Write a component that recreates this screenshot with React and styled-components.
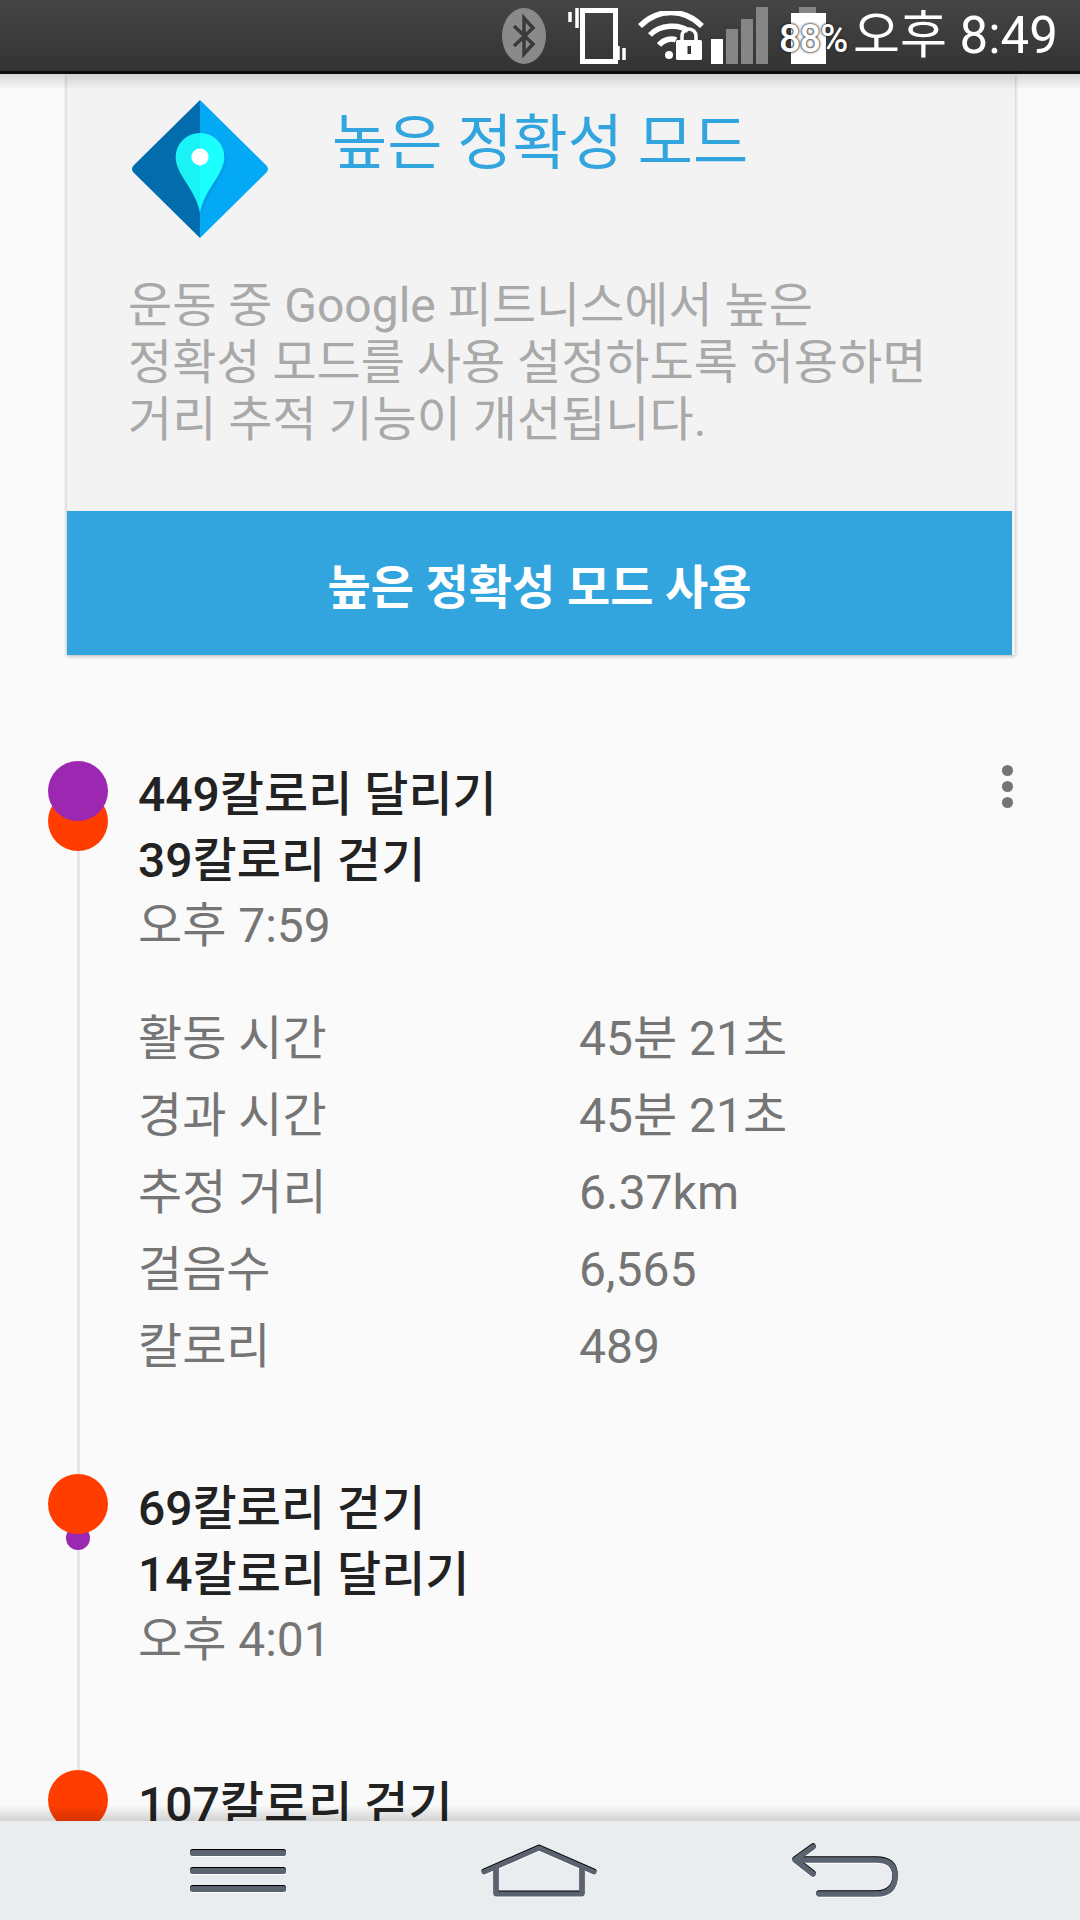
import React from 'react';
import styled, { createGlobalStyle } from 'styled-components';

const Global = createGlobalStyle`
  html, body { margin: 0; padding: 0; background: #fafafa; }
  body { font-family: Roboto, "Noto Sans CJK KR", sans-serif; }
`;
const Screen = styled.div`
  width: 1080px; height: 1920px; overflow: hidden; position: relative;
  display: flex; flex-direction: column; background: #fafafa;
`;
const StatusBar = styled.div`
  height: 74px; flex: none; background: linear-gradient(#454545, #333); position: relative; z-index: 2;
  display: flex; align-items: center; padding-left: 502px; color: #fff;
  border-bottom: 3px solid #0c0c0c; box-sizing: border-box;
  &::after { content: ""; position: absolute; left: 0; right: 0; top: 74px; height: 16px;
    background: linear-gradient(rgba(0,0,0,.14), rgba(0,0,0,0)); }
`;
const Slot = styled.span`
  display: inline-flex; flex: none; margin-left: ${p => p.$ml || 0}px; position: relative;
`;
const Clock = styled.span`
  font-size: 51px; line-height: 72px; white-space: nowrap; margin-left: 27px;
`;
const Content = styled.div`flex: 1; min-height: 0; overflow: hidden; display: flex; flex-direction: column;`;
const Card = styled.section`
  margin: 0 65px 0 67px; background: #f3f3f3; box-shadow: 0 1px 4px rgba(0,0,0,.3); flex: none;
`;
const CardHead = styled.div`
  display: flex; height: 203px; padding: 26px 0 0 64px; gap: 63px; box-sizing: border-box;
`;
const CardTitle = styled.h2`
  margin: 7px 0 0; font-size: 60px; font-weight: 400; color: #33a5de; line-height: 74px;
`;
const CardBody = styled.p`
  margin: 0; padding: 0 0 0 61px; font-size: 48px; line-height: 57px; height: 234px; color: #a9a9a9; white-space: pre-line;
`;
const CardButton = styled.div`
  height: 144px; background: #33a5de; color: #fff; font-size: 47px; font-weight: 700;
  display: flex; align-items: center; justify-content: center; margin-right: 3px;
`;
const Timeline = styled.div`
  padding-top: 104px; display: flex; flex-direction: column;
`;
const Entry = styled.article`
  position: relative; padding: ${p => p.$pt}px 0 ${p => p.$pb}px 138px;
  &::before { content: ""; position: absolute; left: 77px; top: 20px; bottom: -20px; width: 3px; background: #e6e6e6; }
`;
const Dot = styled.span`
  position: absolute; border-radius: 50%; background: ${p => p.$c}; z-index: 1;
  left: ${p => p.$x}px; top: ${p => p.$y}px; width: ${p => p.$s}px; height: ${p => p.$s}px;
`;
const Strong = styled.div`
  font-size: 48px; font-weight: 500; color: #222; line-height: 66px;
`;
const Time = styled.div`
  font-size: 48px; color: #757575; line-height: 64px;
`;
const Stats = styled.div`
  display: grid; grid-template-columns: 441px 1fr; margin-top: 42px;
  font-size: 48px; color: #757575; line-height: 77px;
`;
const Menu = styled.div`
  position: absolute; top: 6px; right: 67px; display: flex; flex-direction: column; gap: 5px;
  & > i { display: block; width: 11px; height: 11px; border-radius: 50%; background: #757575; }
`;
const NavBar = styled.nav`
  position: absolute; left: 0; right: 0; bottom: 0; height: 99px; background: #e9edf0; box-sizing: border-box; z-index: 3;
  display: flex; align-items: center; justify-content: space-between; padding: 0 182px 0 190px;
  &::before { content: ""; position: absolute; left: 0; right: 0; top: -16px; height: 16px;
    background: linear-gradient(rgba(0,0,0,0), rgba(0,0,0,.16)); }
  & > svg { filter: drop-shadow(0 -1px 0 #000) drop-shadow(0 1px 0 #fff); }
`;

const Bt = () => (
  <svg width="44" height="56" viewBox="0 0 44 56">
    <ellipse cx="22" cy="28" rx="22" ry="28" fill="#8a8a8a"/>
    <path d="M12 18 L31 36 L22 46 V10 L31 20 L12 38" fill="none" stroke="#3a3a3a" strokeWidth="3.5"/>
  </svg>
);
const Vibe = () => (
  <svg width="59" height="56" viewBox="0 0 59 56" fill="none" stroke="#fff">
    <rect x="14.5" y="2.5" width="33" height="51" strokeWidth="5"/>
    <path d="M2 4v10M9 0v20" strokeWidth="3.5"/>
    <path d="M50 38v14M56 40v12" strokeWidth="3.5"/>
  </svg>
);
const Wifi = () => (
  <svg width="66" height="50" viewBox="0 0 66 50" fill="none" stroke="#fff" strokeWidth="5.5">
    <path d="M2 15 C20 -3 46 -3 64 15"/>
    <path d="M12 24 C22 13 42 13 50 20"/>
    <path d="M21 34 C26 28 34 27 38 29"/>
    <circle cx="31" cy="44" r="4" fill="#fff" stroke="none"/>
    <rect x="38" y="29" width="26" height="20" rx="1.5" fill="#fff" stroke="none"/>
    <path d="M44 29v-4a7 7 0 0 1 14 0v4" strokeWidth="3.5"/>
    <rect x="49.5" y="35" width="3.5" height="8" fill="#333" stroke="none"/>
  </svg>
);
const Signal = () => (
  <svg width="58" height="57" viewBox="0 0 58 57" fill="#868686">
    <rect x="0" y="32" width="12" height="25" fill="#fff"/>
    <rect x="15" y="22" width="12" height="35"/>
    <rect x="30" y="12" width="12" height="45"/>
    <rect x="45" y="0" width="12" height="57"/>
  </svg>
);
const Battery = () => (
  <>
    <svg width="35" height="57" viewBox="0 0 35 57">
      <rect x="8" y="0" width="17" height="6" fill="#868686"/>
      <rect x="0" y="6" width="35" height="51" fill="#fff"/>
    </svg>
    <BatteryText>88%</BatteryText>
  </>
);
const BatteryText = styled.span`
  position: absolute; top: 12px; left: -12px; font-size: 38px; font-weight: 500; line-height: 40px; letter-spacing: -1px; color: #fff;
  text-shadow: 0 0 3px #222, 0 0 2px #222; white-space: nowrap;
`;
const Pin = () => (
  <PinSvg width="138" height="138" viewBox="2 1 136 138" preserveAspectRatio="none">
    <path d="M70 1 L5 66 Q1 70 5 74 L70 139 Z" fill="#026cad"/>
    <path d="M70 1 L135 66 Q139 70 135 74 L70 139 Z" fill="#03a9f4"/>
    <path d="M70 114 C66 90 46 76 46 58 a24 24 0 0 1 48 0 C94 76 74 90 70 114Z" fill="#0288d1" opacity=".35" transform="translate(2 2)"/>
    <path d="M70 114 C66 90 46 76 46 58 a24 24 0 0 1 24 -24 Z" fill="#1af3f5"/>
    <path d="M70 114 C74 90 94 76 94 58 a24 24 0 0 0 -24 -24 Z" fill="#1cffff"/>
    <circle cx="70" cy="58" r="8.5" fill="#fff"/>
  </PinSvg>
);
const PinSvg = styled.svg`flex: none;`;
const Menu3 = () => (
  <svg width="96" height="43" viewBox="0 0 96 43" fill="#5c6370">
    <rect x="0" y="1" width="96" height="6" rx="2.5"/>
    <rect x="0" y="19" width="96" height="6" rx="2.5"/>
    <rect x="0" y="37" width="96" height="6" rx="2.5"/>
  </svg>
);
const Home = () => (
  <svg width="116" height="52" viewBox="0 0 116 52" fill="none" stroke="#5c6370" strokeWidth="5" strokeLinecap="round" strokeLinejoin="round">
    <path d="M3 27 L58 3 L113 27"/>
    <path d="M15 23 V49 H101 V23"/>
  </svg>
);
const Back = () => (
  <svg width="106" height="53" viewBox="0 0 106 53" fill="none" stroke="#5c6370" strokeWidth="5.5" strokeLinecap="round" strokeLinejoin="round">
    <path d="M21 3 L3 16 L21 30"/>
    <path d="M5 16 H84 Q103 16 103 32 Q103 50 84 50 H27"/>
  </svg>
);

const stats = [
  ['활동 시간', '45분 21초'],
  ['경과 시간', '45분 21초'],
  ['추정 거리', '6.37km'],
  ['걸음수', '6,565'],
  ['칼로리', '489'],
];

export default function App() {
  return (
    <Screen>
      <Global />
      <StatusBar>
        <Slot><Bt /></Slot>
        <Slot $ml={22}><Vibe /></Slot>
        <Slot $ml={11}><Wifi /></Slot>
        <Slot $ml={7}><Signal /></Slot>
        <Slot $ml={22}><Battery /></Slot>
        <Clock>오후 8:49</Clock>
      </StatusBar>
      <Content>
        <Card>
          <CardHead>
            <Pin />
            <CardTitle>높은 정확성 모드</CardTitle>
          </CardHead>
          <CardBody>{'운동 중 Google 피트니스에서 높은\n정확성 모드를 사용 설정하도록 허용하면\n거리 추적 기능이 개선됩니다.'}</CardBody>
          <CardButton>높은 정확성 모드 사용</CardButton>
        </Card>
        <Timeline>
          <Entry $pt={3} $pb={89}>
            <Dot $c="#ff3d00" $x={48} $y={32} $s={60} />
            <Dot $c="#9c27b0" $x={48} $y={2} $s={60} />
            <Strong>449칼로리 달리기</Strong>
            <Strong>39칼로리 걷기</Strong>
            <Time>오후 7:59</Time>
            <Stats>
              {stats.map(([k, v]) => (
                <React.Fragment key={k}><span>{k}</span><span>{v}</span></React.Fragment>
              ))}
            </Stats>
            <Menu><i /><i /><i /></Menu>
          </Entry>
          <Entry $pt={2} $pb={98}>
            <Dot $c="#9c27b0" $x={66} $y={52} $s={24} />
            <Dot $c="#ff3d00" $x={48} $y={0} $s={60} />
            <Strong>69칼로리 걷기</Strong>
            <Strong>14칼로리 달리기</Strong>
            <Time>오후 4:01</Time>
          </Entry>
          <Entry $pt={2} $pb={100}>
            <Dot $c="#ff3d00" $x={48} $y={0} $s={60} />
            <Strong>107칼로리 걷기</Strong>
          </Entry>
        </Timeline>
      </Content>
      <NavBar><Menu3 /><Home /><Back /></NavBar>
    </Screen>
  );
}
